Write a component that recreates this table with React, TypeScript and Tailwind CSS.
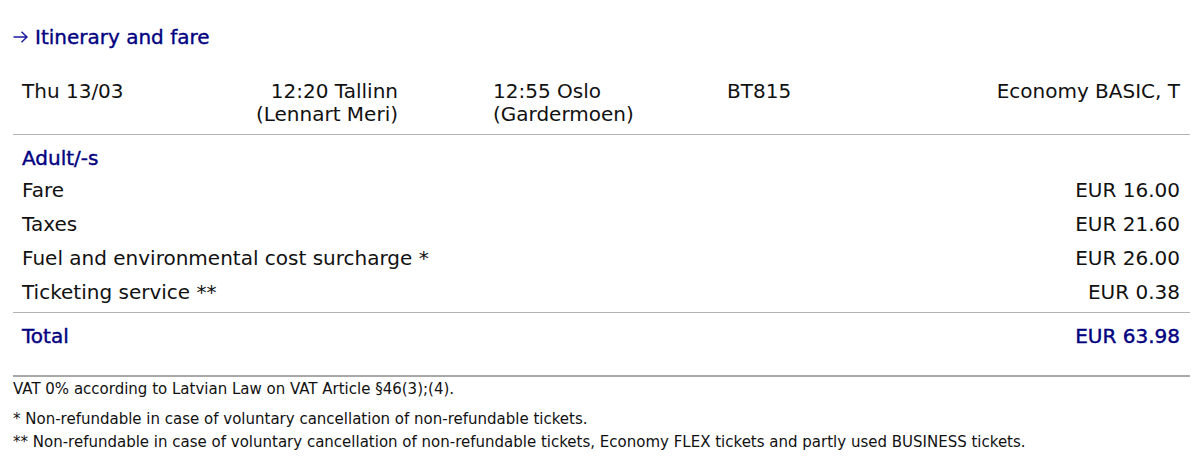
export default function App() {
  const rows = [
    { label: "Fare", value: "EUR 16.00" },
    { label: "Taxes", value: "EUR 21.60" },
    { label: "Fuel and environmental cost surcharge *", value: "EUR 26.00" },
    { label: "Ticketing service **", value: "EUR 0.38" },
  ];

  return (
    <div className="w-[1200px] h-[462px] bg-white text-[#111] font-['DejaVu_Sans',Verdana,sans-serif] overflow-hidden">
      <div className="pl-[13px] pr-[10px]">
        {/* Heading */}
        <div className="pt-[25px] h-[49px] flex items-center gap-[7px] text-[#000080] leading-[24px]">
          <svg width="15" height="12" viewBox="0 0 15 12" fill="none" stroke="#1a1aa0" strokeWidth="1.5">
            <path d="M0.5 6H14M8.5 0.8L14 6L8.5 11.2" />
          </svg>
          <span className="text-[20px] [-webkit-text-stroke:0.35px_#000080]">Itinerary and fare</span>
        </div>

        {/* Flight row */}
        <div className="pt-[31px] pb-[8px] pl-[9px] pr-[10px] flex text-[20px] leading-[23px] border-b border-[#b4b4b4]">
          <div className="w-[228px]">Thu 13/03</div>
          <div className="w-[148px] text-right">
            12:20 Tallinn
            <br />
            (Lennart Meri)
          </div>
          <div className="ml-[95px] w-[234px]">
            12:55 Oslo
            <br />
            (Gardermoen)
          </div>
          <div className="w-[200px]">BT815</div>
          <div className="flex-1 text-right">Economy BASIC, T</div>
        </div>

        {/* Fare breakdown */}
        <div className="pt-[6px] pb-[3px] pl-[9px] pr-[10px] border-b border-[#b4b4b4] text-[20px]">
          <div className="h-[32px] pt-[2px] flex items-center text-[#000080] [-webkit-text-stroke:0.4px_#000080]">
            Adult/-s
          </div>
          {rows.map((r) => (
            <div key={r.label} className="h-[34px] flex items-center justify-between">
              <span>{r.label}</span>
              <span>{r.value}</span>
            </div>
          ))}
        </div>

        {/* Total */}
        <div className="pb-[20px] pl-[9px] pr-[10px] border-b-2 border-[#a8a8a8]">
          <div className="h-[42px] pt-[4px] flex items-center justify-between text-[20px] text-[#000080] [-webkit-text-stroke:0.4px_#000080]">
            <span>Total</span>
            <span>EUR 63.98</span>
          </div>
        </div>

        {/* Notes */}
        <div className="pt-[2px] text-[15px]">
          <div className="h-[20px] flex items-center">
            VAT 0% according to Latvian Law on VAT Article §46(3);(4).
          </div>
          <div className="pt-[9px] leading-[23px]">
            <div>* Non-refundable in case of voluntary cancellation of non-refundable tickets.</div>
            <div>
              ** Non-refundable in case of voluntary cancellation of non-refundable tickets, Economy FLEX
              tickets and partly used BUSINESS tickets.
            </div>
          </div>
        </div>
      </div>
    </div>
  );
}
